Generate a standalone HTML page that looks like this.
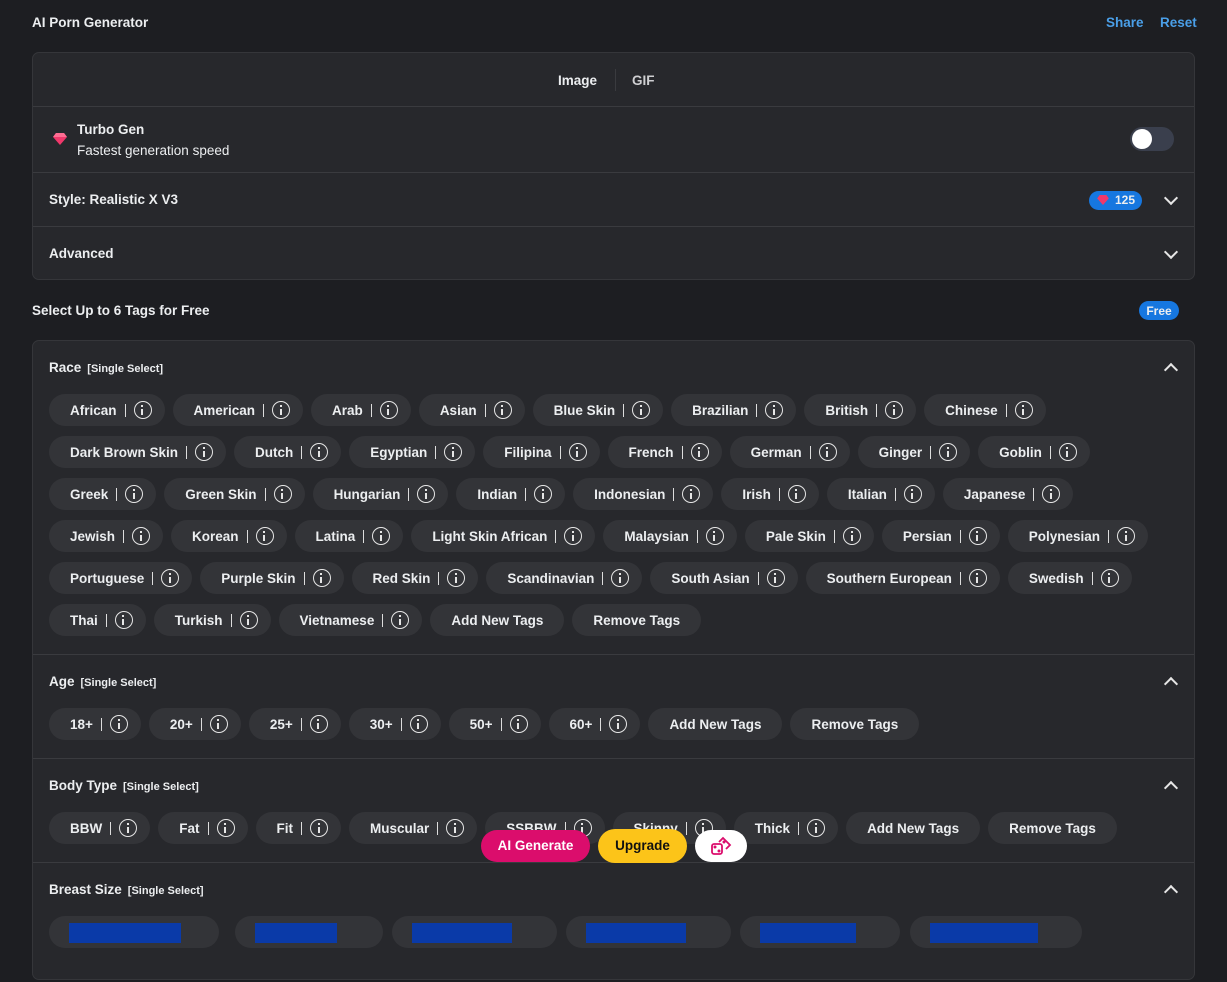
<!DOCTYPE html>
<html><head><meta charset="utf-8"><style>
*{box-sizing:border-box;margin:0;padding:0}
body{width:1227px;height:927px;overflow:hidden;background:#1d1e22;font-family:"Liberation Sans",sans-serif;color:#eceef0;position:relative}
.b{font-weight:bold}
.card{position:absolute;left:32px;width:1163px;background:#27282c;border:1px solid #35363a;border-radius:7px}
.row{position:absolute;left:0;right:0;border-top:1px solid #3a3b3f}
.lbl{position:absolute;left:16px;font-size:13.5px;font-weight:bold}
.chev{position:absolute;right:18px;width:10px;height:10px;border-right:2px solid #e6e6e6;border-bottom:2px solid #e6e6e6}
.down{transform:rotate(45deg)}
.up{transform:rotate(-135deg)}
.tags{position:absolute;left:16px;display:flex;flex-direction:column;gap:10px}
.tr{display:flex;gap:8px}
.chip{height:32px;border-radius:16px;background:#333438;display:flex;align-items:center;padding:0 13px 0 21px;font-size:13.5px;font-weight:bold;white-space:nowrap}
.chip .s{width:1px;height:13px;background:#ddd;margin:0 8px}
.chip .i{width:18px;height:18px;border:1.6px solid #e6e6e6;border-radius:50%;position:relative}
.chip .i:before{content:"";position:absolute;left:6.6px;top:3px;width:2px;height:2px;background:#e6e6e6}
.chip .i:after{content:"";position:absolute;left:6.6px;top:6.5px;width:2px;height:6px;background:#e6e6e6}
.chip.pl{padding:0 21px}
.ss{font-size:11px;font-weight:bold;margin-left:6px}
</style></head><body>
<div class="b" style="position:absolute;left:32px;top:15px;font-size:13.5px">AI Porn Generator</div>
<div class="b" style="position:absolute;left:1106px;top:15px;font-size:13.5px;color:#4a9fe8">Share</div>
<div class="b" style="position:absolute;left:1160px;top:15px;font-size:13.5px;color:#4a9fe8">Reset</div>

<div class="card" style="top:52px;height:228px">
 <div class="b" style="position:absolute;left:525px;top:20px;font-size:13.5px">Image</div>
 <div style="position:absolute;left:582px;top:16px;width:1px;height:22px;background:#3a3b3f"></div>
 <div class="b" style="position:absolute;left:599px;top:20px;font-size:13.5px;color:#cfcfd2">GIF</div>
 <div class="row" style="top:53px;height:66px">
  <svg style="position:absolute;left:20px;top:26px" width="14" height="12" viewBox="0 0 14 12"><path d="M3 0h8l3 4-7 8-7-8z" fill="#f0386b"/><path d="M3 0h8l3 4H0z" fill="#ff6d92"/></svg>
  <div class="b" style="position:absolute;left:44px;top:15px;font-size:13.5px">Turbo Gen</div>
  <div style="position:absolute;left:44px;top:36px;font-size:13.5px">Fastest generation speed</div>
  <div style="position:absolute;right:20px;top:20px;width:44px;height:24px;border-radius:12px;background:#3a3f4d"><div style="position:absolute;left:2px;top:2px;width:20px;height:20px;border-radius:50%;background:#fff"></div></div>
 </div>
 <div class="row" style="top:119px;height:54px">
  <div class="lbl" style="top:19px">Style: Realistic X V3</div>
  <div style="position:absolute;right:52px;top:18px;width:53px;height:19px;border-radius:10px;background:#1677e0;font-size:12px;font-weight:bold;padding:2px 0 0 26px">125
   <svg style="position:absolute;left:8px;top:4px" width="12" height="10" viewBox="0 0 14 12"><path d="M3 0h8l3 4-7 8-7-8z" fill="#f0386b"/></svg></div>
  <div class="chev down" style="top:20px"></div>
 </div>
 <div class="row" style="top:173px;height:54px">
  <div class="lbl" style="top:19px">Advanced</div>
  <div class="chev down" style="top:20px"></div>
 </div>
</div>

<div class="b" style="position:absolute;left:32px;top:303px;font-size:13.5px">Select Up to 6 Tags for Free</div>
<div class="b" style="position:absolute;left:1139px;top:301px;width:40px;height:19px;border-radius:10px;background:#1677e0;font-size:12px;text-align:center;padding-top:3px">Free</div>

<div class="card" style="top:340px;height:640px">
 <div class="lbl" style="top:19px">Race<span class="ss">[Single Select]</span></div>
 <div class="chev up" style="top:24px"></div>
 <div class="tags" style="top:53px">
  <div class="tr"><div class="chip">African<span class="s"></span><span class="i"></span></div><div class="chip">American<span class="s"></span><span class="i"></span></div><div class="chip">Arab<span class="s"></span><span class="i"></span></div><div class="chip">Asian<span class="s"></span><span class="i"></span></div><div class="chip">Blue Skin<span class="s"></span><span class="i"></span></div><div class="chip">Brazilian<span class="s"></span><span class="i"></span></div><div class="chip">British<span class="s"></span><span class="i"></span></div><div class="chip">Chinese<span class="s"></span><span class="i"></span></div></div>
  <div class="tr"><div class="chip">Dark Brown Skin<span class="s"></span><span class="i"></span></div><div class="chip">Dutch<span class="s"></span><span class="i"></span></div><div class="chip">Egyptian<span class="s"></span><span class="i"></span></div><div class="chip">Filipina<span class="s"></span><span class="i"></span></div><div class="chip">French<span class="s"></span><span class="i"></span></div><div class="chip">German<span class="s"></span><span class="i"></span></div><div class="chip">Ginger<span class="s"></span><span class="i"></span></div><div class="chip">Goblin<span class="s"></span><span class="i"></span></div></div>
  <div class="tr"><div class="chip">Greek<span class="s"></span><span class="i"></span></div><div class="chip">Green Skin<span class="s"></span><span class="i"></span></div><div class="chip">Hungarian<span class="s"></span><span class="i"></span></div><div class="chip">Indian<span class="s"></span><span class="i"></span></div><div class="chip">Indonesian<span class="s"></span><span class="i"></span></div><div class="chip">Irish<span class="s"></span><span class="i"></span></div><div class="chip">Italian<span class="s"></span><span class="i"></span></div><div class="chip">Japanese<span class="s"></span><span class="i"></span></div></div>
  <div class="tr"><div class="chip">Jewish<span class="s"></span><span class="i"></span></div><div class="chip">Korean<span class="s"></span><span class="i"></span></div><div class="chip">Latina<span class="s"></span><span class="i"></span></div><div class="chip">Light Skin African<span class="s"></span><span class="i"></span></div><div class="chip">Malaysian<span class="s"></span><span class="i"></span></div><div class="chip">Pale Skin<span class="s"></span><span class="i"></span></div><div class="chip">Persian<span class="s"></span><span class="i"></span></div><div class="chip">Polynesian<span class="s"></span><span class="i"></span></div></div>
  <div class="tr"><div class="chip">Portuguese<span class="s"></span><span class="i"></span></div><div class="chip">Purple Skin<span class="s"></span><span class="i"></span></div><div class="chip">Red Skin<span class="s"></span><span class="i"></span></div><div class="chip">Scandinavian<span class="s"></span><span class="i"></span></div><div class="chip">South Asian<span class="s"></span><span class="i"></span></div><div class="chip">Southern European<span class="s"></span><span class="i"></span></div><div class="chip">Swedish<span class="s"></span><span class="i"></span></div></div>
  <div class="tr"><div class="chip">Thai<span class="s"></span><span class="i"></span></div><div class="chip">Turkish<span class="s"></span><span class="i"></span></div><div class="chip">Vietnamese<span class="s"></span><span class="i"></span></div><div class="chip pl">Add New Tags</div><div class="chip pl">Remove Tags</div></div>
 </div>
 <div class="row" style="top:313px;height:104px">
  <div class="lbl" style="top:19px">Age<span class="ss">[Single Select]</span></div>
  <div class="chev up" style="top:24px"></div>
  <div class="tags" style="top:53px"><div class="tr"><div class="chip">18+<span class="s"></span><span class="i"></span></div><div class="chip">20+<span class="s"></span><span class="i"></span></div><div class="chip">25+<span class="s"></span><span class="i"></span></div><div class="chip">30+<span class="s"></span><span class="i"></span></div><div class="chip">50+<span class="s"></span><span class="i"></span></div><div class="chip">60+<span class="s"></span><span class="i"></span></div><div class="chip pl">Add New Tags</div><div class="chip pl">Remove Tags</div></div></div>
 </div>
 <div class="row" style="top:417px;height:104px">
  <div class="lbl" style="top:19px">Body Type<span class="ss">[Single Select]</span></div>
  <div class="chev up" style="top:24px"></div>
  <div class="tags" style="top:53px"><div class="tr"><div class="chip">BBW<span class="s"></span><span class="i"></span></div><div class="chip">Fat<span class="s"></span><span class="i"></span></div><div class="chip">Fit<span class="s"></span><span class="i"></span></div><div class="chip">Muscular<span class="s"></span><span class="i"></span></div><div class="chip">SSBBW<span class="s"></span><span class="i"></span></div><div class="chip">Skinny<span class="s"></span><span class="i"></span></div><div class="chip">Thick<span class="s"></span><span class="i"></span></div><div class="chip pl">Add New Tags</div><div class="chip pl">Remove Tags</div></div></div>
 </div>
 <div class="row" style="top:521px;height:120px">
  <div class="lbl" style="top:19px">Breast Size<span class="ss">[Single Select]</span></div>
  <div class="chev up" style="top:24px"></div>
  <div style="position:absolute;top:53px;left:16px;width:1040px;height:32px">
   <div style="position:absolute;left:0;width:170px;height:32px;border-radius:16px;background:#333438"><div style="position:absolute;left:20px;top:7px;width:112px;height:20px;background:#0a3aa8"></div></div>
   <div style="position:absolute;left:186px;width:148px;height:32px;border-radius:16px;background:#333438"><div style="position:absolute;left:20px;top:7px;width:82px;height:20px;background:#0a3aa8"></div></div>
   <div style="position:absolute;left:343px;width:165px;height:32px;border-radius:16px;background:#333438"><div style="position:absolute;left:20px;top:7px;width:100px;height:20px;background:#0a3aa8"></div></div>
   <div style="position:absolute;left:517px;width:165px;height:32px;border-radius:16px;background:#333438"><div style="position:absolute;left:20px;top:7px;width:100px;height:20px;background:#0a3aa8"></div></div>
   <div style="position:absolute;left:691px;width:160px;height:32px;border-radius:16px;background:#333438"><div style="position:absolute;left:20px;top:7px;width:96px;height:20px;background:#0a3aa8"></div></div>
   <div style="position:absolute;left:861px;width:172px;height:32px;border-radius:16px;background:#333438"><div style="position:absolute;left:20px;top:7px;width:108px;height:20px;background:#0a3aa8"></div></div>
  </div>
 </div>
</div>

<div class="b" style="position:absolute;left:481px;top:830px;width:109px;height:32px;border-radius:16px;background:#db0d6c;color:#fff;font-size:13.5px;text-align:center;padding-top:8px">AI Generate</div>
<div class="b" style="position:absolute;left:598px;top:829px;width:89px;height:34px;border-radius:17px;background:#fcc419;color:#111;font-size:13.5px;text-align:center;padding-top:9px">Upgrade</div>
<div style="position:absolute;left:695px;top:830px;width:52px;height:32px;border-radius:16px;background:#fff">
 <svg style="position:absolute;left:15px;top:6px" width="22" height="20" viewBox="0 0 22 20" fill="none" stroke="#db0d6c" stroke-width="1.8"><rect x="2" y="8" width="10" height="10" rx="2"/><path d="M9 6l4-4 7 7-4 4"/><circle cx="5" cy="11" r=".6" fill="#db0d6c"/><circle cx="9" cy="15" r=".6" fill="#db0d6c"/><circle cx="14" cy="6" r=".6" fill="#db0d6c"/></svg>
</div>
</body></html>
